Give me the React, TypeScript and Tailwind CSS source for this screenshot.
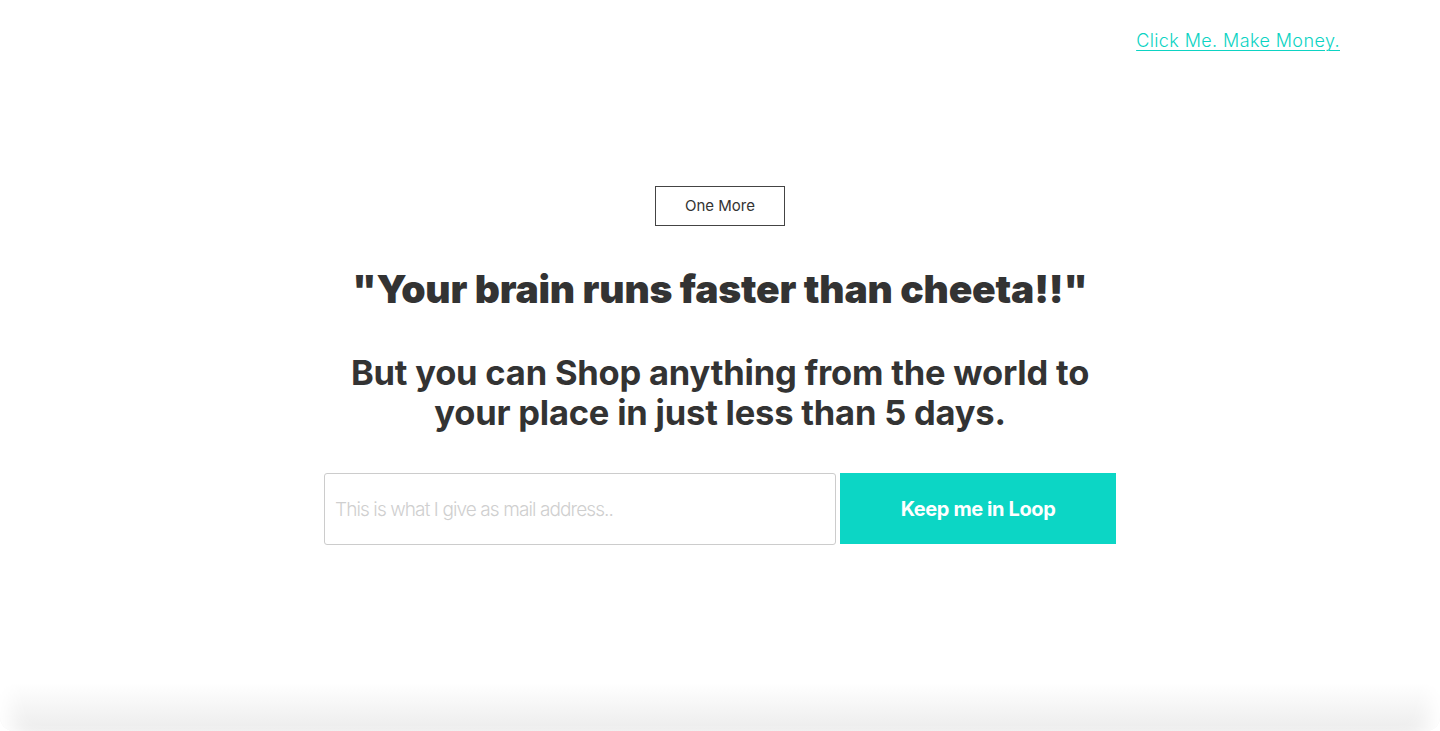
import React from "react";

export default function App() {
  return (
    <div
      className="relative flex h-[731px] w-full flex-col overflow-hidden bg-white text-[#333]"
      style={{ fontFamily: "Inter, 'Liberation Sans', sans-serif" }}
    >
      <div className="flex justify-end pr-[100px] pt-[29px]">
        <a
          href="#"
          className="text-[18px] font-light leading-[24px] tracking-[0.4px] text-[#0cd3c3] underline underline-offset-[3px] decoration-1"
        >
          Click Me. Make Money.
        </a>
      </div>

      <div className="flex flex-col items-center pt-[133px]">
        <button className="h-[40px] w-[130px] border border-[#444] text-[15px] text-[#333]">
          One More
        </button>
        <h1 className="mt-[41px] text-[39px] font-black leading-[44px] tracking-[-0.2px] text-[#333]">
          "Your brain runs faster than cheeta!!"
        </h1>
        <h2 className="mt-[42px] w-[800px] text-center text-[34.5px] font-bold leading-[40px] tracking-[-0.2px] text-[#333]">
          But you can Shop anything from the world to your place in just less than 5 days.
        </h2>
        <div className="mt-[40px] flex gap-[4px]">
          <input
            type="text"
            placeholder="This is what I give as mail address.."
            className="h-[72px] w-[512px] rounded-[3px] border border-[#cccccc] px-[10px] text-[19px] font-light tracking-[-0.9px] text-[#333] outline-none placeholder:text-[#cfcfcf]"
          />
          <button className="h-[71px] w-[276px] bg-[#0cd6c5] text-[20px] font-bold tracking-[-0.4px] text-white">
            Keep me in Loop
          </button>
        </div>
      </div>

      <div className="mt-auto h-[48px] rounded-b-[14px] bg-gradient-to-b from-white to-[#ececec] shadow-[inset_20px_0_20px_-10px_white,inset_-20px_0_20px_-10px_white]" />
    </div>
  );
}
